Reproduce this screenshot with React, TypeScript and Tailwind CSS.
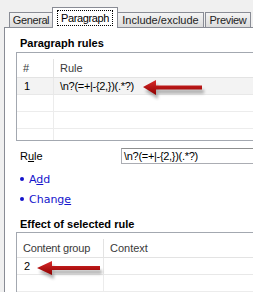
export default function App() {
  const ui = { fontFamily: '"Liberation Sans", Arial, sans-serif' };
  const link = { fontFamily: '"DejaVu Sans", Verdana, sans-serif' };

  return (
    <div
      className="relative h-[292px] w-[253px] overflow-hidden bg-[#f0f0f0] text-[11px] leading-[13px] text-black"
      style={ui}
    >
      {/* tab strip */}
      <div className="relative z-10 -mb-px ml-[9px] mt-[7px] flex h-[21px] items-end">
        <div className="flex h-[16px] w-[44px] items-center justify-center border border-[#898c95] bg-gradient-to-b from-[#f4f4f4] to-[#dcdcdc] pt-px tracking-[-0.4px] text-[#1e1e1e]">
          General
        </div>
        <div className="-ml-px flex h-[21px] w-[66px] items-start justify-center border border-b-0 border-[#898c95] bg-white pt-[2px]">
          <span className="flex h-[16px] w-[56px] items-center justify-center border border-dotted border-black tracking-[-0.4px]">
            Paragraph
          </span>
        </div>
        <div className="-ml-px flex h-[16px] w-[87px] items-center justify-center border border-[#898c95] bg-gradient-to-b from-[#f4f4f4] to-[#dcdcdc] pt-px text-[#1e1e1e]">
          Include/exclude
        </div>
        <div className="ml-[1px] flex h-[16px] w-[46px] items-center justify-center border border-[#898c95] bg-gradient-to-b from-[#f4f4f4] to-[#dcdcdc] pt-px tracking-[-0.3px] text-[#1e1e1e]">
          Preview
        </div>
      </div>

      {/* panel */}
      <div className="ml-[4px] h-[280px] w-[270px] border-l border-t border-[#898c95] bg-white pl-[11px] pt-[9px]">
        <div className="pl-[4px] font-bold">Paragraph rules</div>

        <div className="mt-[2px] h-[89px] overflow-hidden border border-[#a3a8b0]">
          <div className="flex h-[25px] border-b border-[#e3e3e3] pt-[6px] text-[#3a3a3a]">
            <div className="flex w-[37px] items-center border-r border-[#e3e3e3] pl-[6px]">#</div>
            <div className="flex items-center pl-[6px]">Rule</div>
          </div>
          <div className="flex h-[17px] border-b border-[#e8e8e8] bg-[#f3f3f3]">
            <div className="flex w-[37px] items-center border-r border-[#e8e8e8] pl-[7px]">1</div>
            <div className="flex items-center pl-[6px] tracking-[-0.3px]">{'\\n?(=+|-{2,})(.*?)'}</div>
          </div>
          {[0, 1, 2].map((i) => (
            <div key={i} className="flex h-[17px] border-b border-[#ececec]">
              <div className="w-[37px] border-r border-[#ececec]" />
              <div />
            </div>
          ))}
        </div>

        <div className="mt-[7px] flex h-[16px] items-center">
          <div className="w-[105px] pl-[4px]">
            R<span className="underline">u</span>le
          </div>
          <div className="flex h-[16px] flex-1 items-center border border-[#abadb3] border-t-[#8e8f8f] pl-[2px] tracking-[-0.3px]">
            {'\\n?(=+|-{2,})(.*?)'}
          </div>
        </div>

        <div className="mt-[5px] flex h-[20px] items-center gap-[5px] pl-[4px] text-[#1414cc]" style={link}>
          <span className="h-[4px] w-[4px] rounded-full bg-[#1414cc]" />
          <span>
            A<span className="underline">d</span>d
          </span>
        </div>
        <div className="flex h-[20px] items-center gap-[5px] pl-[4px] text-[#1414cc]" style={link}>
          <span className="h-[4px] w-[4px] rounded-full bg-[#1414cc]" />
          <span>
            Chang<span className="underline">e</span>
          </span>
        </div>

        <div className="mt-[9px] pl-[4px] font-bold">Effect of selected rule</div>

        <div className="mt-[1px] h-[70px] overflow-hidden border border-b-0 border-[#a3a8b0]">
          <div className="flex h-[25px] border-b border-[#e3e3e3] pt-[6px] text-[#3a3a3a]">
            <div className="flex w-[87px] items-center border-r border-[#e3e3e3] pl-[6px] tracking-[-0.2px]">
              Content group
            </div>
            <div className="flex items-center pl-[6px]">Context</div>
          </div>
          <div className="flex h-[17px] border-b border-[#e8e8e8]">
            <div className="flex w-[87px] items-center border-r border-[#e8e8e8] pl-[7px]">2</div>
            <div />
          </div>
          <div className="flex h-[17px] border-b border-[#ececec]">
            <div className="w-[87px] border-r border-[#ececec]" />
            <div />
          </div>
        </div>
      </div>

      {/* annotation arrows */}
      <svg className="pointer-events-none absolute left-0 top-0" width="253" height="292" viewBox="0 0 253 292">
        <defs>
          <linearGradient id="red" x1="0" y1="0" x2="0" y2="1">
            <stop offset="0" stopColor="#d92a2a" />
            <stop offset="1" stopColor="#8f0000" />
          </linearGradient>
          <filter id="blur" x="-20%" y="-50%" width="140%" height="200%">
            <feGaussianBlur stdDeviation="1.5" />
          </filter>
        </defs>
        <g opacity="0.45" filter="url(#blur)" transform="translate(2 4)">
          <path d="M143 87 L156 80 L156 85.5 L202 85.5 L202 89.5 L156 89.5 L156 95 Z" fill="#555" />
          <path d="M37 268 L52 261 L52 266 L100 266 L100 270 L52 270 L52 275 Z" fill="#555" />
        </g>
        <path d="M143 87 L156 80 L156 85.5 L202 85.5 L202 89.5 L156 89.5 L156 95 Z" fill="url(#red)" />
        <path d="M37 268 L52 261 L52 266 L100 266 L100 270 L52 270 L52 275 Z" fill="url(#red)" />
      </svg>
    </div>
  );
}
